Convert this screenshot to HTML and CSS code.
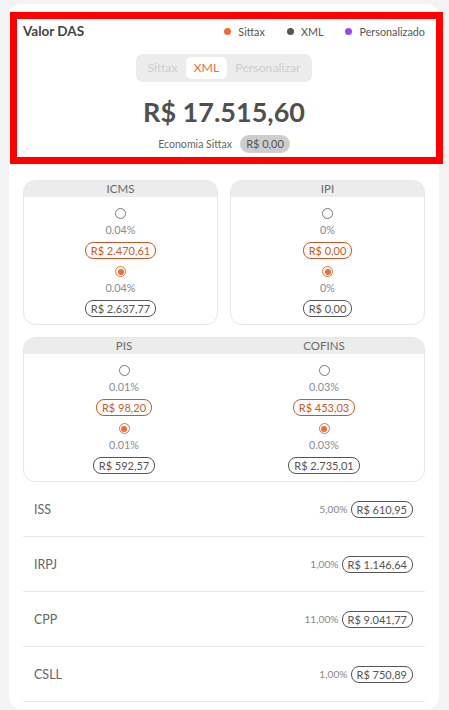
FILE: index.html
```html
<!DOCTYPE html>
<html lang="pt-BR">
<head>
<meta charset="utf-8">
<title>Valor DAS</title>
<link rel="stylesheet" href="styles.css">
</head>
<body>
<div class="card">
  <section class="das">
    <div class="das-head">
      <h1 class="das-title">Valor DAS</h1>
      <ul class="legend">
        <li><span class="dot dot-sittax"></span>Sittax</li>
        <li><span class="dot dot-xml"></span>XML</li>
        <li><span class="dot dot-custom"></span>Personalizado</li>
      </ul>
    </div>
    <div class="seg">
      <span class="seg-item">Sittax</span>
      <span class="seg-item active">XML</span>
      <span class="seg-item">Personalizar</span>
    </div>
    <div class="amount">R$ 17.515,60</div>
    <div class="economy">
      <span class="economy-label">Economia Sittax</span>
      <span class="pill-grey">R$ 0,00</span>
    </div>
  </section>

  <div class="tax-row">
    <div class="tax-box">
      <div class="tax-head"><span>ICMS</span></div>
      <div class="tax-body">
        <div class="tax-col">
          <span class="radio"></span>
          <span class="pct">0.04%</span>
          <span class="pill pill-orange">R$ 2.470,61</span>
          <span class="radio checked"></span>
          <span class="pct">0.04%</span>
          <span class="pill">R$ 2.637,77</span>
        </div>
      </div>
    </div>
    <div class="tax-box">
      <div class="tax-head"><span>IPI</span></div>
      <div class="tax-body">
        <div class="tax-col">
          <span class="radio"></span>
          <span class="pct">0%</span>
          <span class="pill pill-orange">R$ 0,00</span>
          <span class="radio checked"></span>
          <span class="pct">0%</span>
          <span class="pill">R$ 0,00</span>
        </div>
      </div>
    </div>
  </div>

  <div class="tax-box tax-wide">
    <div class="tax-head"><span>PIS</span><span>COFINS</span></div>
    <div class="tax-body">
      <div class="tax-col">
        <span class="radio"></span>
        <span class="pct">0.01%</span>
        <span class="pill pill-orange">R$ 98,20</span>
        <span class="radio checked"></span>
        <span class="pct">0.01%</span>
        <span class="pill">R$ 592,57</span>
      </div>
      <div class="tax-col">
        <span class="radio"></span>
        <span class="pct">0.03%</span>
        <span class="pill pill-orange">R$ 453,03</span>
        <span class="radio checked"></span>
        <span class="pct">0.03%</span>
        <span class="pill">R$ 2.735,01</span>
      </div>
    </div>
  </div>

  <ul class="list">
    <li class="list-row"><span class="list-label">ISS</span><span class="list-right"><span class="list-pct">5,00%</span><span class="pill">R$ 610,95</span></span></li>
    <li class="list-row"><span class="list-label">IRPJ</span><span class="list-right"><span class="list-pct">1,00%</span><span class="pill">R$ 1.146,64</span></span></li>
    <li class="list-row"><span class="list-label">CPP</span><span class="list-right"><span class="list-pct">11,00%</span><span class="pill">R$ 9.041,77</span></span></li>
    <li class="list-row"><span class="list-label">CSLL</span><span class="list-right"><span class="list-pct">1,00%</span><span class="pill">R$ 750,89</span></span></li>
  </ul>
</div>
</body>
</html>
```

FILE: styles.css
```css
* { box-sizing: border-box; }

body {
  margin: 0;
  background: #f3f3f4;
  font-family: "Lato", "Open Sans", sans-serif;
  color: #555;
}

.card {
  margin: 4px 10px 0 9px;
  width: 430px;
  background: #fff;
  border-radius: 12px;
  padding: 8px 14px 7px 14px;
}

/* ---------- DAS header ---------- */
.das {
  border: 7px solid #ff0000;
  margin: 0 -18px 0 -13px;
  padding: 3px 11px 4px 6px;
  display: flex;
  flex-direction: column;
  align-items: center;
}

.das-head {
  align-self: stretch;
  display: flex;
  justify-content: space-between;
  align-items: center;
  height: 18px;
}

.das-title {
  margin: 0;
  font-size: 13.5px;
  font-weight: 700;
  color: #444;
  line-height: 18px;
}

.legend {
  list-style: none;
  margin: 0;
  padding: 0;
  display: flex;
  gap: 22px;
  font-size: 10.8px;
  color: #555;
}

.legend li {
  display: flex;
  align-items: center;
  gap: 7px;
}

.dot {
  width: 7px;
  height: 7px;
  border-radius: 50%;
  display: inline-block;
}
.dot-sittax { background: #ea6f37; }
.dot-xml { background: #555; }
.dot-custom { background: #9b47f2; }

.seg {
  margin-top: 14px;
  background: #ececec;
  border-radius: 7px;
  padding: 3px;
  display: flex;
  height: 28px;
}

.seg-item {
  padding: 0 8px;
  font-size: 12.3px;
  line-height: 22px;
  color: #cfcfcf;
}

.seg-item.active {
  background: #fff;
  border-radius: 5px;
  color: #ea6f37;
}

.amount {
  margin-top: 13px;
  font-size: 27px;
  font-weight: 700;
  line-height: 34px;
  color: #505050;
}

.economy {
  margin-top: 6px;
  display: flex;
  align-items: center;
  gap: 8px;
}

.economy-label {
  font-size: 10.6px;
  color: #666;
}

.pill-grey {
  background: #cdcdcd;
  border-radius: 9px;
  height: 18px;
  line-height: 18px;
  padding: 0 6px;
  font-size: 11px;
  color: #555;
}

/* ---------- tax boxes ---------- */
.tax-row {
  margin-top: 16px;
  display: grid;
  grid-template-columns: 1fr 1fr;
  gap: 12px;
}

.tax-box {
  border: 1px solid #e5e5f0;
  border-radius: 12px;
  overflow: hidden;
}

.tax-wide {
  margin-top: 12px;
}

.tax-head {
  background: #ececec;
  height: 16px;
  display: grid;
  grid-auto-flow: column;
  grid-auto-columns: 1fr;
  text-align: center;
  font-size: 11.5px;
  line-height: 16px;
  color: #6a6a6a;
}

.tax-body {
  display: grid;
  grid-auto-flow: column;
  grid-auto-columns: 1fr;
  padding: 11px 0 7px;
}

.tax-col {
  display: flex;
  flex-direction: column;
  align-items: center;
}

.radio {
  width: 11px;
  height: 11px;
  border-radius: 50%;
  border: 1px solid #7a7a7a;
  background: #fff;
  position: relative;
}

.radio.checked {
  border-color: #ea6f37;
  margin-top: 7px;
}

.radio.checked::after {
  content: "";
  position: absolute;
  left: 1.5px;
  top: 1.5px;
  width: 6px;
  height: 6px;
  border-radius: 50%;
  background: #ea6f37;
}

.pct {
  margin-top: 4px;
  font-size: 10.8px;
  line-height: 13px;
  color: #878b94;
}

.tax-col .pill {
  margin-top: 6px;
}

.pill {
  display: inline-block;
  border: 1px solid #555;
  border-radius: 8px;
  height: 17px;
  line-height: 15px;
  padding: 0 5px;
  font-size: 11px;
  color: #555;
  white-space: nowrap;
}

.pill-orange {
  border-color: #c9592a;
  color: #c9592a;
}

/* ---------- list ---------- */
.list {
  list-style: none;
  margin: 0;
  padding: 0;
}

.list-row {
  height: 55px;
  border-bottom: 1px solid #e6e6f0;
  display: flex;
  align-items: center;
  justify-content: space-between;
  padding: 0 12px 0 11px;
}

.list-label {
  font-size: 12.5px;
  color: #666;
}

.list-right {
  display: flex;
  align-items: center;
  gap: 3px;
}

.list-pct {
  font-size: 10.2px;
  color: #888;
}
```
